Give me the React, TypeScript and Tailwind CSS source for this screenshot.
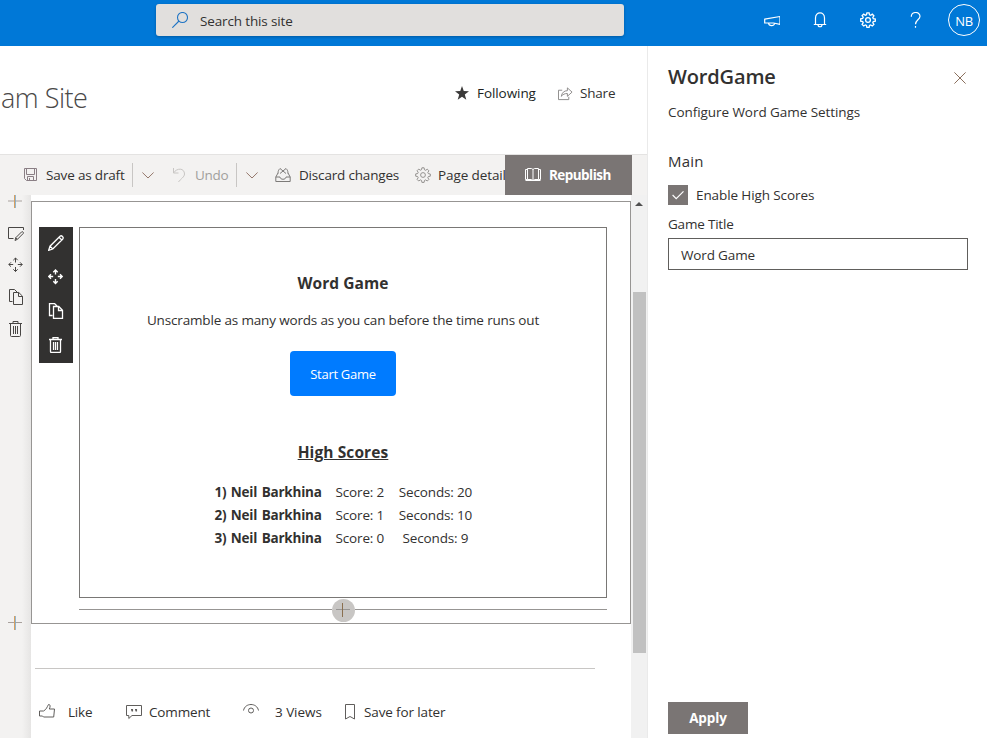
import type { ReactNode } from "react";

type IconProps = { className?: string; size?: number; box?: number; children: ReactNode; sw?: number };

function Icon({ className = "", size = 16, box = 16, sw = 1, children }: IconProps) {
  return (
    <svg
      className={`block shrink-0 ${className}`}
      width={size}
      height={size}
      viewBox={`0 0 ${box} ${box}`}
      fill="none"
      stroke="currentColor"
      strokeWidth={sw}
    >
      {children}
    </svg>
  );
}

const GEAR =
  "M6.9 .8h2.2l.4 2 1.1.5 1.7-1.1 1.6 1.6-1.1 1.7.5 1.1 2 .4v2.2l-2 .4-.5 1.1 1.1 1.7-1.6 1.6-1.7-1.1-1.1.5-.4 2H6.900l-.4-2-1.100-.5-1.700 1.100-1.600-1.600 1.100-1.700-.5-1.100-2-.4V6.900l2-.4.5-1.100-1.100-1.700 1.600-1.600 1.700 1.100 1.100-.5z";

const Gear = ({ className, sw }: { className?: string; sw?: number }) => (
  <Icon className={className} sw={sw}>
    <path d={GEAR} />
    <circle cx="8" cy="8" r="2.4" />
  </Icon>
);

const Plus = ({ className }: { className?: string }) => (
  <Icon className={className} size={14} box={14}>
    <path d="M0 6.500h14" stroke="#a8a19d" />
    <path d="M6.500 0v14" stroke="#d9a05f" />
    <path d="M7.500 0v14" stroke="#7ba7c7" strokeOpacity="0.8" />
  </Icon>
);

const Chevron = () => (
  <Icon size={12} box={12} className="text-[#94776b]">
    <path d="M.4 3.500 6 9l5.600-5.500" />
  </Icon>
);

const Pencil = ({ sw }: { sw?: number }) => (
  <Icon sw={sw}>
    <path d="M.7 15.300 2 11.200 12 1.200c1.700-1.300 4 1 2.800 2.800l-10 10zM2 11.200l2.800 2.800M11 2.200 13.800 5" />
  </Icon>
);

const Move = ({ sw }: { sw?: number }) => (
  <Icon sw={sw}>
    <path d="M7.500 1v4.500M5.300 3.200 7.500 1l2.200 2.200M7.500 14.500V10M5.300 12.300l2.200 2.200 2.200-2.200M.8 7.500h4.400M3 5.300.8 7.500 3 9.700M14.200 7.500H9.800M12 5.300l2.200 2.200L12 9.700" />
  </Icon>
);

const Copy = ({ sw }: { sw?: number }) => (
  <Icon sw={sw}>
    <path d="M4.500 12.500H1.500v-12H6.500l2.500 2.500M5.500 3.500h5.300l3.700 3.700v8.300h-9zM10.500 3.500v4h4" />
  </Icon>
);

const Trash = ({ sw }: { sw?: number }) => (
  <Icon sw={sw}>
    <path d="M1 2.500h13M5 2.500v-2h5v2M2.500 2.500v12q0 1 1 1h8q1 0 1-1v-12M5.500 5v8M7.500 5v8M9.500 5v8" />
  </Icon>
);

const EditSection = () => (
  <Icon>
    <path d="M5.500 13.500h-5v-11h15v2.500M7 15.500l.8-2.800 5.800-5.800c1-.8 2.300.5 1.600 1.600l-5.800 5.800zM7.800 12.700l1.600 1.600" />
  </Icon>
);

function Header() {
  return (
    <header className="flex h-[46px] shrink-0 items-start bg-[#0078d7] text-white">
      <div className="ml-[156px] mt-1 flex h-8 w-[468px] items-center rounded-[3px] bg-[#e1dfdd] pl-4 shadow-[0_1px_3px_rgba(0,0,0,0.25)]">
        <Icon className="text-[#1f74c4]" sw={1.1}>
          <circle cx="10.500" cy="5.500" r="5" />
          <path d="M7 9 .3 15.700" />
        </Icon>
        <span className="ml-3 mt-0.5 tracking-[-0.14px] text-[#323130]">Search this site</span>
      </div>
      <div className="ml-[140px] flex h-10 items-center">
        <Icon sw={1.2}>
          <path d="M.7 7.200 16 4.500v7.800L9.500 11H.7zM4.500 11.200c.5 3.300 5.500 3.300 6 .3" />
        </Icon>
        <Icon className="ml-8" sw={1.2}>
          <path d="M3.500 12.500V6c0-6.800 9-6.800 9 0v6.500M1.800 12.500h12.400M6 12.500c0 3 4 3 4 0" />
        </Icon>
        <Gear className="ml-8" sw={1.3} />
        <Icon className="ml-8" sw={1.2}>
          <path d="M3.300 4.800C3.300-.8 12-.8 12 4.200c0 3.300-4.500 4-4.500 8M7.500 14v1.800" />
        </Icon>
        <div className="ml-6 flex size-8 items-center justify-center rounded-full border border-white pt-px text-[13px] tracking-[-0.4px]">NB</div>
      </div>
    </header>
  );
}

function SiteHeader() {
  return (
    <div className="flex h-[109px] shrink-0 items-start border-b border-[#e4e3e2]">
      <h1 className="ml-px mt-8 w-[440px] text-[27px] leading-10 font-light tracking-[-0.5px] text-[#4a4948]">am Site</h1>
      <div className="ml-[14px] mt-[37px] flex items-center">
        <Icon size={14} box={16} className="text-[#3b3a39]">
          <path fill="currentColor" stroke="none" d="M8 0l2 5.800 6 .2-4.800 3.700 1.700 6.100L8 12.300l-4.900 3.500 1.700-6.100L0 6l6-.2z" />
        </Icon>
        <span className="ml-2 w-[61px] tracking-[-0.07px] whitespace-nowrap text-[#201f1e]">Following</span>
        <Icon size={15} className="ml-5 text-[#8a8886]">
          <path d="M4.500 4.500h-4v10h11v-3M3.500 11c.8-4 3-6 6.500-6V2l5 4.500-5 4.500V8c-3 0-4.500.8-6.500 3z" />
        </Icon>
        <span className="ml-[7px] tracking-[-0.2px]">Share</span>
      </div>
    </div>
  );
}

function Toolbar() {
  return (
    <div className="flex h-10 shrink-0 items-center bg-[#f3f2f1]">
      <Icon size={14} box={14} className="ml-6 text-[#8a7f85]">
        <path d="M.5.5h12v12h-10l-2-2zM2.500.5v6h8v-6M3.500 12.500v-4h6v4M5.500 10v2.500" />
      </Icon>
      <span className="ml-2 w-[79px] tracking-[-0.17px] whitespace-nowrap">Save as draft</span>
      <span className="ml-[7px] h-6 w-px bg-[#c8c6c4]" />
      <span className="ml-[9px]"><Chevron /></span>
      <Icon size={16} className="ml-[18px] text-[#c8c6c4]">
        <path d="M1.500 1v5h5M1.500 6C5 .5 12.500 1 12.500 7c0 3-4 5-6 8" />
      </Icon>
      <span className="ml-[7px] w-[34px] tracking-[-0.3px] text-[#a19f9d]">Undo</span>
      <span className="ml-[7px] h-6 w-px bg-[#c8c6c4]" />
      <span className="ml-[9px]"><Chevron /></span>
      <Icon className="ml-[17px] text-[#7d7b79]">
        <path d="M3 6 .8 10v4.500h14.400V10L13 6M.8 10H5c0 3 6 3 6 0h4.200M3 6.500c0-3 1-4 2-5M13 6.500c0-3-1-4-2-5M5 1.500l6 5M11 1.500l-6 5" />
      </Icon>
      <span className="ml-2 w-[101px] tracking-[-0.18px] whitespace-nowrap">Discard changes</span>
      <Gear className="ml-[15px] text-[#8a8886]" sw={0.9} />
      <span className="ml-[7px] w-[67px] tracking-[-0.1px] whitespace-nowrap">Page detail</span>
      <button className="flex h-10 w-[127px] items-center bg-[#7a7574] pl-5 font-bold text-white">
        <Icon size={16}>
          <path d="M.5 2.500h2v10h-2zM2.500 1.500h4l1.500 1v11l-1.500-1h-4zM8 2.500l1.500-1h4v11h-4l-1.500 1M13.500 2.500h2v10h-2M.5 13.500h15" />
        </Icon>
        <span className="ml-2 tracking-[-0.55px]">Republish</span>
      </button>
    </div>
  );
}

const SCORES = [
  { rank: 1, score: 2, seconds: 20 },
  { rank: 2, score: 1, seconds: 10 },
  { rank: 3, score: 0, seconds: 9 },
];

function WebPart() {
  return (
    <div className="flex h-[371px] w-[528px] flex-col items-center border border-[#797775]">
      <h2 className="mt-[45px] text-[15.500px] leading-5 font-bold tracking-[0.05px]">Word Game</h2>
      <p className="mt-[17px] tracking-[-0.16px]">Unscramble as many words as you can before the time runs out</p>
      <button className="mt-[21px] h-[45px] w-[106px] rounded bg-[#007bff] pt-px text-[13px] tracking-[-0.28px] text-white">Start Game</button>
      <h2 className="mt-[46px] text-[15.500px] leading-5 font-bold tracking-[0.1px] underline">High Scores</h2>
      <div className="mt-[18px] flex flex-col pl-px">
        {SCORES.map((s) => (
          <div key={s.rank} className="flex h-[23px] items-center whitespace-nowrap">
            <span className="w-[107px] font-bold tracking-[-0.22px] [word-spacing:1.200px]">{s.rank}) Neil Barkhina</span>
            <span className="ml-[14px] w-[49px] tracking-[-0.15px]">Score: {s.score}</span>
            <span className="ml-[14px] w-[74px] text-center tracking-[-0.15px]">Seconds: {s.seconds}</span>
          </div>
        ))}
      </div>
    </div>
  );
}

function Canvas() {
  return (
    <div className="flex min-h-0 flex-1">
      <div className="flex w-[31px] shrink-0 flex-col bg-[linear-gradient(to_right,#f3f2f1_22px,#e6e5e4)] pl-2 text-[#484644]">
        <Icon size={14} box={14}>
          <path d="M0 6h14" stroke="#a8a19d" />
          <path d="M6.500 0v13" stroke="#d9a05f" />
          <path d="M7.500 0v13" stroke="#7ba7c7" strokeOpacity="0.8" />
        </Icon>
        <div className="mt-4 flex flex-col gap-4">
          <EditSection />
          <Move />
          <Copy />
          <Trash />
        </div>
        <Plus className="mt-[279px]" />
      </div>
      <div className="flex w-[600px] shrink-0 flex-col pt-[6px]">
        <div className="flex h-[423px] border border-[#979593] pl-[7px] pt-[25px]">
          <div className="flex h-[136px] w-[34px] flex-col items-center gap-[18px] bg-[#323130] pt-2 text-white">
            <Pencil sw={1.3} />
            <Move sw={1.4} />
            <Copy sw={1.3} />
            <Trash sw={1.3} />
          </div>
          <div className="ml-[6px] w-[528px]">
            <WebPart />
            <div className="flex h-6 items-center">
              <span className="mb-px h-px flex-1 bg-[#979593]" />
              <span className="flex size-[23px] items-center justify-center rounded-full bg-[#c8c6c4]">
                <Icon size={14} box={14}>
                  <path d="M0 6.500h14" stroke="#979593" />
                  <path d="M6.500 0v14" stroke="#8a6f4f" />
                </Icon>
              </span>
              <span className="mb-px h-px flex-1 bg-[#979593]" />
            </div>
          </div>
        </div>
        <div className="ml-1 mt-11 h-px w-[560px] bg-[#c8c6c4]" />
        <div className="mt-[33px] flex items-center pl-2 whitespace-nowrap">
          <Icon className="text-[#605e5c]">
            <path d="M.5 7h4c3-1.500 3.500-4 5-6.500 2-.2 2 2 .8 4.500h5.200l-.8 8H4.500l-1-1h-3z" />
          </Icon>
          <span className="ml-[13px] w-[25px] tracking-[-0.2px]">Like</span>
          <Icon className="ml-[33px] text-[#605e5c]">
            <path d="M.5 1.500h15v10H6L2.800 14.500v-3H.5z" />
            <path strokeWidth="1.500" d="M5 5.700h2M9 5.700h2M6.300 5v2.500M10.300 5v2.500" />
          </Icon>
          <span className="ml-[7px] w-[62px] tracking-[-0.15px]">Comment</span>
          <Icon className="mb-1 ml-[32px] text-[#605e5c]">
            <path d="M.5 8.500C2 .5 14 .5 15.500 8.500" />
            <circle cx="8" cy="8.500" r="2.500" />
          </Icon>
          <span className="ml-4 w-[47px] tracking-[-0.05px]">3 Views</span>
          <Icon className="ml-5 text-[#605e5c]">
            <path d="M3.500.5h9v14.500L8 12.500 3.500 15z" />
          </Icon>
          <span className="ml-[6px] tracking-[-0.13px]">Save for later</span>
        </div>
      </div>
      <div className="flex w-4 shrink-0 flex-col items-center bg-[#f1f1f1] pt-[5px]">
        <Icon size={8} box={8} className="text-[#505050]">
          <path d="M0 6 4 2l4 4z" fill="currentColor" stroke="none" />
        </Icon>
        <div className="mt-[84px] h-[361px] w-[13px] bg-[#c1c1c1]" />
      </div>
    </div>
  );
}

function PropertyPane() {
  return (
    <aside className="flex flex-1 flex-col border-l border-[#eaeaea] pl-5 pr-[19px]">
      <div className="mt-[18px] flex items-center justify-between">
        <h2 className="-mt-px text-[20px] leading-7 font-semibold tracking-[-0.15px]">WordGame</h2>
        <Icon size={12} box={12} className="mr-0.5 text-[#8a6f5c]">
          <path d="M.4.4l11.200 11.200M11.600.4.4 11.600" />
        </Icon>
      </div>
      <p className="mt-[11px] tracking-[-0.06px]">Configure Word Game Settings</p>
      <h3 className="mt-[29px] text-[15px] leading-5 tracking-[0.2px]">Main</h3>
      <label className="mt-[14px] flex items-center">
        <span className="flex size-5 items-center justify-center bg-[#7a7574] text-white">
          <Icon size={12} box={12} sw={1.200}>
            <path d="M.6 6 4.200 9.600 11.500 2.300" />
          </Icon>
        </span>
        <span className="ml-2 tracking-[-0.1px]">Enable High Scores</span>
      </label>
      <span className="mt-[9px] tracking-[-0.2px]">Game Title</span>
      <div className="mt-1 flex h-8 w-[300px] items-center border border-[#605e5c] pl-3 pt-0.5 tracking-[-0.15px]">Word Game</div>
      <button className="mb-1 mt-auto h-8 w-20 bg-[#7a7574] text-center font-bold tracking-[-0.1px] text-white">Apply</button>
    </aside>
  );
}

export default function App() {
  return (
    <div className="flex h-[738px] w-[987px] flex-col overflow-hidden bg-white font-['Open_Sans','Noto_Sans',sans-serif] text-[13.5px] leading-5 text-[#323130]">
      <Header />
      <div className="flex min-h-0 flex-1">
        <main className="flex w-[647px] shrink-0 flex-col">
          <SiteHeader />
          <Toolbar />
          <Canvas />
        </main>
        <PropertyPane />
      </div>
    </div>
  );
}
